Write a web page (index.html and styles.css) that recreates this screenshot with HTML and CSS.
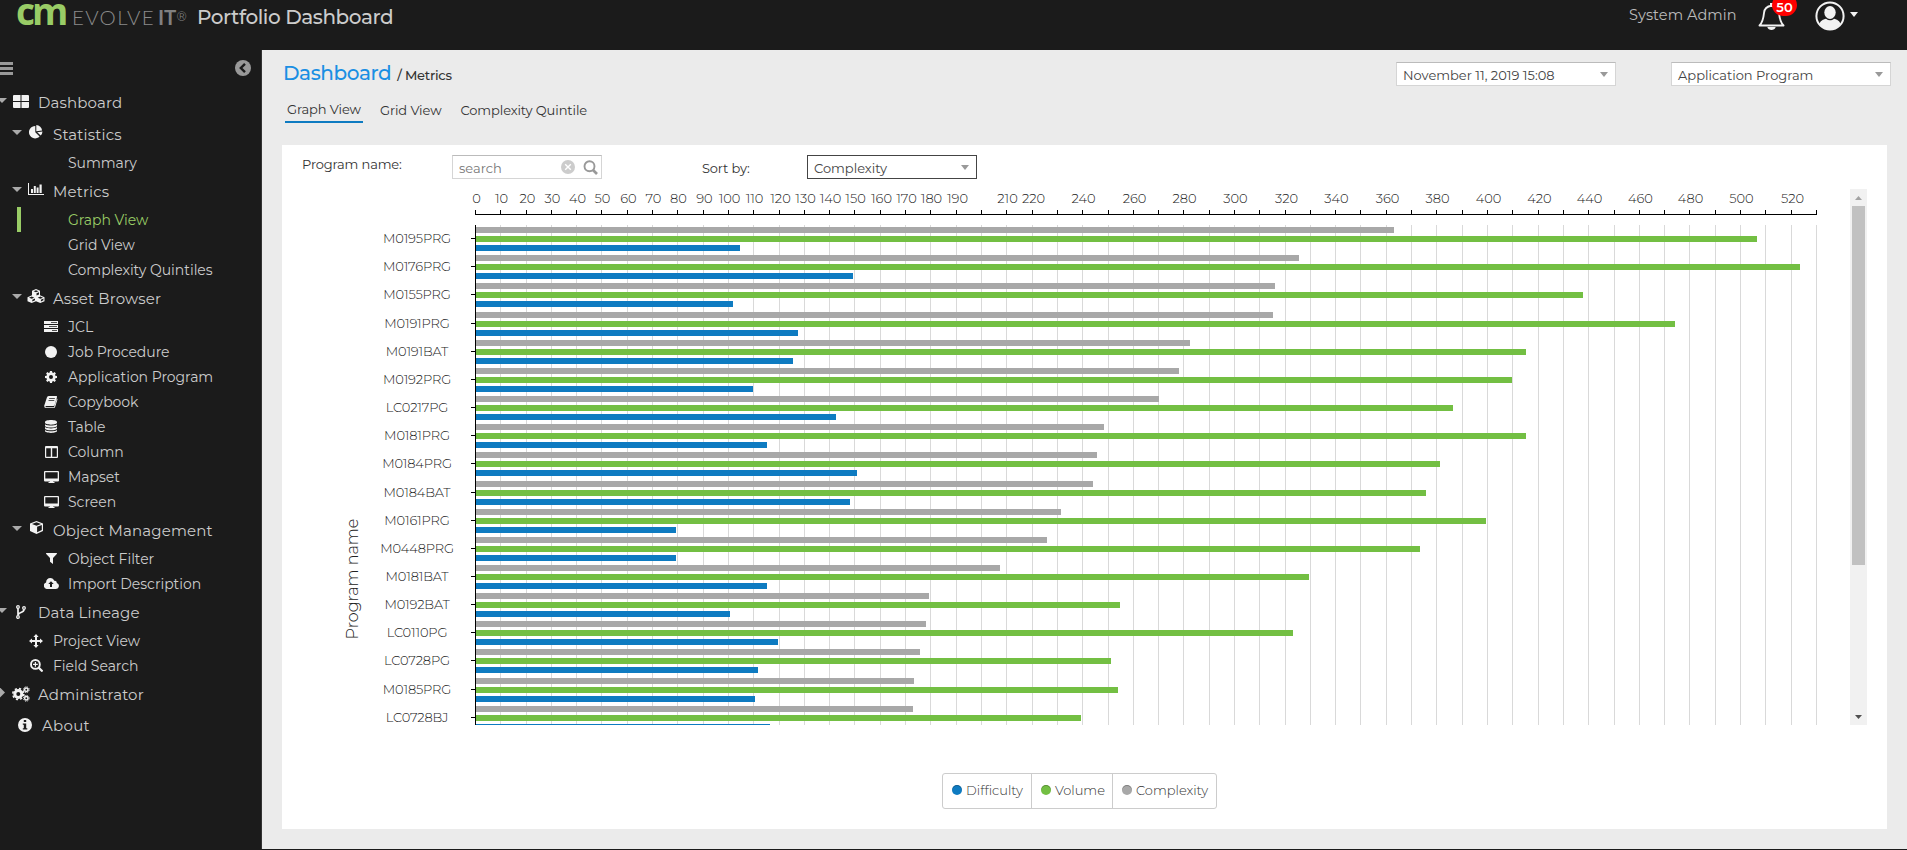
FILE: index.html
```
<!DOCTYPE html>
<html lang="en">
<head>
    <meta charset="UTF-8">
    <meta name="viewport" content="width=device-width, initial-scale=1.0">
    <title>Portfolio Dashboard</title>
    <link rel="stylesheet" href="styles.css">
</head>
<body>
  <svg class="sprite" aria-hidden="true">
    <symbol id="i-grid" viewBox="0 0 16 13"><path d="M1 0h6.5v6H0V1a1 1 0 0 1 1-1zM8.5 0H15a1 1 0 0 1 1 1v5H8.500zM0 7h7.500v6H1a1 1 0 0 1-1-1zM8.500 7H16v5a1 1 0 0 1-1 1H8.500z"/></symbol>
    <symbol id="i-pie" viewBox="0 0 14 14"><path d="M6.300 1v6.200l4.300 4.300A6.200 6.200 0 1 1 6.300 1z"/><path d="M7.300 0a6 6 0 0 1 5.800 5.500L7.300 6.300zM8.200 7.200l5.300-.6a6 6 0 0 1-1.800 4z"/></symbol>
    <symbol id="i-chart" viewBox="0 0 16 12"><path d="M0 0h1v11h15v1H0zM3 6h2v4H3zM5.800 3h2v7h-2zM8.600 4.500h2V10h-2zM11.500 1.500h2.200V10h-2.200z"/></symbol>
    <symbol id="i-cubes" viewBox="0 0 18 14"><path fill-rule="evenodd" d="M9 0l4 1.700v4.500l4.500 2v4L13.300 14 9 12.200 4.700 14 .5 12.200v-4L5 6.200V1.700zM6.500 2.300L9 3.300l2.500-1L9 1.300zM9.500 6.500l2.500-1V3.300l-2.500 1zM2 8.700l2.700 1.100 2.600-1.100-2.600-1.100zM10.700 8.700l2.600 1.100L16 8.700l-2.700-1.100zM5.300 12.500l2.700-1.200V9.500l-2.700 1.200zM13.900 12.500l2.500-1.200V9.500l-2.500 1.200z"/></symbol>
    <symbol id="i-server" viewBox="0 0 14 11"><path fill-rule="evenodd" d="M0 0h14v3H0zM0 4h14v3H0zM0 8h14v3H0zM7 1.200v.7h6v-.7zM5 5.200v.7h8v-.7zM8 9.200v.7h5v-.7z"/></symbol>
    <symbol id="i-circle" viewBox="0 0 12 12"><circle cx="6" cy="6" r="6"/></symbol>
    <symbol id="i-cog" viewBox="0 0 12 12"><path fill-rule="evenodd" d="M5 0h2l.3 1.600 1 .4 1.300-.9 1.300 1.300-.9 1.300.4 1L12 5v2l-1.600.3-.4 1 .9 1.300-1.300 1.300-1.300-.9-1 .4L7 12H5l-.3-1.600-1-.4-1.300.9-1.300-1.300.9-1.300-.4-1L0 7V5l1.600-.3.4-1-.9-1.300 1.300-1.300 1.300.9 1-.4zM6 4a2 2 0 1 0 0 4 2 2 0 0 0 0-4z"/></symbol>
    <symbol id="i-book" viewBox="0 0 14 12"><path fill-rule="evenodd" d="M5 0h7.300q1 0 .7 1l-2.400 8q-.3 1-1.300 1H2.200q-.8 0-.8.6t.8.6H10l2.900-8.700q.8.4.5 1.300l-2.300 7.200q-.3 1-1.300 1H2Q0 12 .2 9.800L2.900 1.400Q3.500 0 5 0zM5.300 2.200l-.3.800h5.700l.3-.8zM4.700 4.200l-.3.8h5.700l.3-.8z"/></symbol>
    <symbol id="i-db" viewBox="0 0 12 13"><path d="M6 0c3.300 0 6 .8 6 1.900v.9c0 1-2.700 1.900-6 1.900S0 3.800 0 2.800v-.9C0 .8 2.700 0 6 0zM0 4.300c1.500 1 4 1.300 6 1.300s4.500-.3 6-1.300v1.400c0 1-2.700 1.800-6 1.800S0 6.700 0 5.700zM0 7.100c1.500 1 4 1.300 6 1.300s4.500-.3 6-1.300v1.400c0 1-2.700 1.800-6 1.800s-6-.8-6-1.800zM0 9.900c1.500 1 4 1.300 6 1.300s4.500-.3 6-1.300v1.200C12 12.200 9.300 13 6 13s-6-.8-6-1.900z"/></symbol>
    <symbol id="i-columns" viewBox="0 0 13 12"><path fill-rule="evenodd" d="M1 0h11q1 0 1 1v10q0 1-1 1H1q-1 0-1-1V1q0-1 1-1zM1.200 2.300v8.500h4.600V2.300zM7.200 2.300v8.500h4.600V2.300z"/></symbol>
    <symbol id="i-desktop" viewBox="0 0 15 12"><path fill-rule="evenodd" d="M1 0h13q1 0 1 1v8.500q0 1-1 1H9.200V11h1.300v1h-6v-1h1.300v-.5H1q-1 0-1-1V1q0-1 1-1zM1.300 1.300v6.300h12.400V1.300z"/></symbol>
    <symbol id="i-cube" viewBox="0 0 13 13"><path fill-rule="evenodd" d="M6.500 0L13 2.400V10l-6.500 3L0 10V2.400zM6.500 1.300L2 3l4.500 1.700L11 3zM7.100 11.300l4.700-2.200V4L7.100 5.800z"/></symbol>
    <symbol id="i-filter" viewBox="0 0 11 11"><path d="M.3 0h10.400q.5.300.1.900L7 5v6L4 8.800V5L.2.900Q-.2.300.3 0z"/></symbol>
    <symbol id="i-cloud" viewBox="0 0 15 11"><path fill-rule="evenodd" d="M6.300 0c2 0 3.400 1.200 3.900 2.800 1.600-.5 2.900.8 2.500 2.300A3 3 0 0 1 12 11H3.500A3.400 3.400 0 0 1 2.100 4.400C2 1.800 3.900 0 6.300 0zM7 3.200L4.300 6H6v3h2V6h1.700z"/></symbol>
    <symbol id="i-branch" viewBox="0 0 10 14"><g fill="none" stroke="currentColor" stroke-width="1.300"><circle cx="2" cy="2" r="1.300"/><circle cx="2" cy="12" r="1.300"/><circle cx="8" cy="3" r="1.300"/><path stroke-width="1.700" d="M2 3.500v7M8 4.500C8 8 2.500 7 2.200 9.800"/></g></symbol>
    <symbol id="i-move" viewBox="0 0 14 14"><path d="M7 0l2.600 3H8v3h3V4.400L14 7l-3 2.600V8H8v3h1.600L7 14l-2.600-3H6V8H3v1.600L0 7l3-2.600V6h3V3H4.400z"/></symbol>
    <symbol id="i-zoomin" viewBox="0 0 13 13"><g fill="none" stroke="currentColor"><circle cx="5.400" cy="5.400" r="4.400" stroke-width="1.900"/><path stroke-width="1.200" d="M3 5.400h4.800M5.400 3v4.800"/><path stroke-width="2.300" stroke-linecap="round" d="M9 9l2.800 2.800"/></g></symbol>
    <symbol id="i-cogs" viewBox="0 0 18 16"><g fill="none" stroke="currentColor"><circle cx="6.300" cy="8" r="3.500" stroke-width="3"/><circle cx="6.300" cy="8" r="5.500" stroke-width="1.600" stroke-dasharray="2.200 2.120"/><circle cx="14.300" cy="3.700" r="1.700" stroke-width="1.500"/><circle cx="14.300" cy="3.700" r="2.900" stroke-width="1" stroke-dasharray="1.200 1.080"/><circle cx="14.300" cy="12.300" r="1.700" stroke-width="1.500"/><circle cx="14.300" cy="12.300" r="2.900" stroke-width="1" stroke-dasharray="1.200 1.080"/></g></symbol>
    <symbol id="i-info" viewBox="0 0 14 14"><path fill-rule="evenodd" d="M7 0a7 7 0 1 1 0 14A7 7 0 0 1 7 0zM5.800 2v2h2.400V2zM4.800 5.500v1.300h1v3.400h-1v1.400h4.500v-1.400H8.200V5.500z"/></symbol>
    <symbol id="i-back" viewBox="0 0 16 16"><circle cx="8" cy="8" r="8"/><path d="M10 3.800L5.800 8l4.200 4.200" fill="none" stroke="#1b1b1b" stroke-width="2.400"/></symbol>
    <symbol id="i-bell" viewBox="0 0 27 29"><path fill="none" stroke="currentColor" stroke-width="1.900" stroke-linejoin="round" d="M1.500 23.500C5 20 5.500 16 6 11c.4-4.200 3-6.700 7.500-7.200 4.500.5 7.100 3 7.500 7.200.5 5 1 9 4.500 12.500z"/><path d="M12 1h3v3h-3zM9.300 25h8.400c-.8 2.300-2.200 3-4.200 3s-3.400-.7-4.200-3z"/></symbol>
    <symbol id="i-user" viewBox="0 0 30 30"><circle cx="15" cy="15" r="13.600" fill="none" stroke="currentColor" stroke-width="2"/><ellipse cx="15" cy="11.500" rx="5.700" ry="6.500"/><path d="M4.500 23c1-3.500 3.500-4.500 6.500-5.300 2.500 2 5.500 2 8 0 3 .8 5.500 1.800 6.500 5.300-5 7.400-16 7.400-21 0z"/></symbol>
    <symbol id="i-clear" viewBox="0 0 14 14"><circle cx="7" cy="7" r="7" fill="#ccc"/><path d="M4.200 4.200l5.600 5.600M9.800 4.200L4.200 9.800" stroke="#fff" stroke-width="1.400"/></symbol>
    <symbol id="i-search" viewBox="0 0 15 15"><g fill="none" stroke="#999"><circle cx="6.500" cy="6.300" r="5" stroke-width="1.900"/><path stroke-width="2.600" d="M10 10l4 4"/></g></symbol>
  </svg>

  <header class="topbar">
    <div class="brand">
      <span class="brand-cm">cm</span>
      <span class="brand-evolve">EVOLVE</span>
      <span class="brand-it">IT</span>
      <span class="brand-reg">®</span>
      <h1 class="brand-title">Portfolio Dashboard</h1>
    </div>
    <div class="user-area">
      <span class="user-name">System Admin</span>
      <div class="bell">
        <svg width="27" height="29"><use href="#i-bell"/></svg>
        <span class="badge">50</span>
      </div>
      <svg class="avatar" width="30" height="30"><use href="#i-user"/></svg>
      <i class="caret"></i>
    </div>
  </header>

  <div class="layout">
    <nav class="sidebar">
      <div class="sidebar-tools">
        <span class="burger"><i></i><i></i><i></i></span>
        <svg class="collapse" width="16" height="16"><use href="#i-back"/></svg>
      </div>
      <div class="group level1"><i class="arrow"></i><span class="icon"><svg width="16" height="13"><use href="#i-grid"/></svg></span><span>Dashboard</span></div>
      <div class="group level2"><i class="arrow"></i><span class="icon"><svg width="14" height="14"><use href="#i-pie"/></svg></span><span>Statistics</span></div>
      <a class="item"><span class="icon"></span>Summary</a>
      <div class="group level2"><i class="arrow"></i><span class="icon"><svg width="16" height="12"><use href="#i-chart"/></svg></span><span>Metrics</span></div>
      <a class="item active"><span class="icon"></span>Graph View</a>
      <a class="item"><span class="icon"></span>Grid View</a>
      <a class="item"><span class="icon"></span>Complexity Quintiles</a>
      <div class="group level2"><i class="arrow"></i><span class="icon"><svg width="18" height="14"><use href="#i-cubes"/></svg></span><span>Asset Browser</span></div>
      <a class="item"><span class="icon"><svg width="14" height="11"><use href="#i-server"/></svg></span>JCL</a>
      <a class="item"><span class="icon"><svg width="12" height="12"><use href="#i-circle"/></svg></span>Job Procedure</a>
      <a class="item"><span class="icon"><svg width="12" height="12"><use href="#i-cog"/></svg></span>Application Program</a>
      <a class="item"><span class="icon"><svg width="14" height="12"><use href="#i-book"/></svg></span>Copybook</a>
      <a class="item"><span class="icon"><svg width="12" height="13"><use href="#i-db"/></svg></span>Table</a>
      <a class="item"><span class="icon"><svg width="13" height="12"><use href="#i-columns"/></svg></span>Column</a>
      <a class="item"><span class="icon"><svg width="15" height="12"><use href="#i-desktop"/></svg></span>Mapset</a>
      <a class="item"><span class="icon"><svg width="15" height="12"><use href="#i-desktop"/></svg></span>Screen</a>
      <div class="group level2"><i class="arrow"></i><span class="icon"><svg width="13" height="13"><use href="#i-cube"/></svg></span><span>Object Management</span></div>
      <a class="item"><span class="icon"><svg width="11" height="11"><use href="#i-filter"/></svg></span>Object Filter</a>
      <a class="item"><span class="icon"><svg width="15" height="11"><use href="#i-cloud"/></svg></span>Import Description</a>
      <div class="group level1"><i class="arrow"></i><span class="icon"><svg width="10" height="14"><use href="#i-branch"/></svg></span><span>Data Lineage</span></div>
      <a class="item shallow"><span class="icon"><svg width="14" height="14"><use href="#i-move"/></svg></span>Project View</a>
      <a class="item shallow"><span class="icon"><svg width="13" height="13"><use href="#i-zoomin"/></svg></span>Field Search</a>
      <div class="group level1"><i class="arrow closed"></i><span class="icon"><svg width="18" height="16"><use href="#i-cogs"/></svg></span><span>Administrator</span></div>
      <div class="group about"><span class="icon"><svg width="14" height="14"><use href="#i-info"/></svg></span><span>About</span></div>
    </nav>

    <main class="content">
      <div class="crumbs">
        <div class="crumb-path"><a class="crumb-root">Dashboard</a><span class="crumb-sub">/ Metrics</span></div>
        <div class="crumb-filters">
          <div class="select">November 11, 2019 15:08<i class="caret grey"></i></div>
          <div class="select">Application Program<i class="caret grey"></i></div>
        </div>
      </div>
      <div class="tabs">
        <a class="tab current">Graph View</a>
        <a class="tab">Grid View</a>
        <a class="tab">Complexity Quintile</a>
      </div>

      <section class="panel">
        <div class="filters">
          <span class="lbl-name">Program name:</span>
          <div class="search"><span>search</span><svg width="14" height="14"><use href="#i-clear"/></svg><svg width="15" height="15"><use href="#i-search"/></svg></div>
          <span class="lbl-sort">Sort by:</span>
          <div class="select dark">Complexity<i class="caret grey"></i></div>
        </div>
        <div class="chart-row">
          <svg id="chart" class="chart" width="1568" height="536"></svg>
          <div class="scrollbar"><i class="up"></i><b class="thumb"></b><i class="down"></i></div>
        </div>
        <div class="legend">
          <span><i class="dot blue"></i>Difficulty</span>
          <span><i class="dot green"></i>Volume</span>
          <span><i class="dot gray"></i>Complexity</span>
        </div>
      </section>
    </main>
  </div>
  <script src="chart.js"></script>
</body>
</html>
```
FILE: styles.css
```
* {
  box-sizing: border-box;
}
body {
  margin: 0;
  height: 850px;
  overflow: hidden;
  background: #1b1b1b;
  font-family: Montserrat, Inter, "Open Sans", sans-serif;
  font-size: 14px;
  color: #333;
}
.sprite {
  position: absolute;
  width: 0;
  height: 0;
}
svg {
  display: block;
  fill: currentColor;
}

/* top bar */
.topbar {
  height: 50px;
  display: flex;
  justify-content: space-between;
  align-items: flex-start;
  color: #ccc;
}
.brand {
  display: flex;
  align-items: baseline;
  height: 50px;
  padding-left: 16px;
}
.brand-cm {
  width: 56px;
  font: 700 37px/22px "Open Sans", sans-serif;
  letter-spacing: -3px;
  color: #9c6;
}
.brand-evolve {
  width: 86px;
  font: 300 20.5px/22px Lato, sans-serif;
  letter-spacing: 1.3px;
  color: #8a8a8a;
}
.brand-it {
  width: 20px;
  font: 700 20.5px/22px Lato, sans-serif;
  color: #808080;
}
.brand-reg {
  width: 19px;
  font-size: 11px;
  line-height: 22px;
  color: #888;
  transform: translateY(-5px) scale(1.15);
}
.brand-title {
  margin: 0;
  font-size: 20px;
  font-weight: 500;
  line-height: 22px;
  letter-spacing: -.43px;
  transform: translateY(-1px);
}
.user-area {
  display: flex;
  padding: 1px 49px 0 0;
}
.user-name {
  width: 129px;
  padding-left: 1px;
  line-height: 29px;
  font-size: 14.5px;
  letter-spacing: .1px;
  color: #bbb;
}
.bell {
  position: relative;
  width: 58px;
  padding: 1px 0 0 1px;
  color: #f2f2f2;
}
.badge {
  position: absolute;
  left: 15px;
  top: -7px;
  width: 25px;
  height: 22px;
  border-radius: 11px;
  background: #f00;
  color: #fff;
  font-size: 13px;
  font-weight: 600;
  line-height: 27px;
  text-align: center;
}
.avatar {
  color: #f2f2f2;
}
.caret {
  width: 0;
  height: 0;
  border: 4px solid transparent;
  border-top: 5px solid #f2f2f2;
  border-bottom: 0;
}
.user-area .caret {
  margin: 11px 0 0 5px;
}
.caret.grey {
  border-top-color: #999;
}

.layout {
  display: flex;
  height: 799px;
}

/* sidebar tree */
.sidebar {
  width: 262px;
  border-right: 1px solid #333;
  color: #ccc;
}
.sidebar-tools {
  display: flex;
  justify-content: space-between;
  height: 36px;
  padding: 10px 10px 0 0;
  color: #999;
}
.burger {
  display: flex;
  flex-direction: column;
  gap: 2px;
  width: 13px;
  padding-top: 2px;
}
.burger i {
  height: 3px;
  background: #999;
}
.group,
.item {
  display: flex;
  align-items: center;
  white-space: nowrap;
}
.group {
  height: 32px;
  font-size: 15px;
  letter-spacing: .15px;
}
.item {
  height: 25px;
  padding-left: 42px;
  font-size: 14px;
  letter-spacing: -.03px;
}
.item.shallow {
  padding-left: 27px;
}
.level1 {
  margin-left: -8px;
}
.level2 {
  padding-left: 7px;
}
.about {
  height: 30px;
  padding-left: 16px;
  letter-spacing: .3px;
}
.icon {
  display: flex;
  justify-content: center;
  width: 18px;
  margin-right: 8px;
  color: #f2f2f2;
}
.level2 .icon {
  margin-bottom: 5px;
}
.level1 .icon {
  margin-bottom: 1px;
}
.arrow {
  width: 10px;
  height: 5px;
  margin: -3px 5px 0;
  background: #aaa;
  clip-path: polygon(0 0, 100% 0, 50% 100%);
}
.arrow.closed {
  width: 5px;
  height: 10px;
  margin: -3px 7px 0 8px;
  clip-path: polygon(0 0, 100% 50%, 0 100%);
}
.item.active {
  margin-left: 17px;
  padding-left: 21px;
  border-left: 4px solid #9c6;
  color: #9c6;
}

/* content */
.content {
  flex: 1;
  background: #ebebeb;
  padding: 12px 16px 0 20px;
}
.crumbs {
  display: flex;
  justify-content: space-between;
  height: 34px;
}
.crumb-path {
  display: flex;
  align-items: baseline;
  gap: 6px;
  padding-left: 1px;
  line-height: 23px;
}
.crumb-root {
  font-size: 20px;
  font-weight: 500;
  letter-spacing: -.4px;
  color: #1a8fe3;
}
.crumb-sub {
  font-size: 13px;
  font-weight: 500;
  letter-spacing: -.25px;
}
.crumb-filters {
  display: flex;
  gap: 55px;
}
.select {
  display: flex;
  justify-content: space-between;
  align-items: center;
  width: 220px;
  height: 24px;
  padding: 2px 7px 0 6px;
  border: 1px solid #d5d5d5;
  border-top-color: #bbb;
  background: #fff;
  font-size: 13px;
  color: #444;
}
.select .caret {
  margin-bottom: 1px;
}
.select.dark {
  width: 170px;
  border-color: #444;
}
.tabs {
  display: flex;
  gap: 15px;
  height: 49px;
  padding-left: 3px;
  font-size: 13px;
  line-height: 27px;
  letter-spacing: -.1px;
}
.tab {
  height: 27px;
  padding: 1px 2px;
  white-space: nowrap;
}
.tab.current {
  width: 78px;
  padding-top: 0;
  border-bottom: 2px solid #0e7bc1;
}

.panel {
  width: 1605px;
  height: 684px;
  background: #fff;
}
.filters {
  display: flex;
  align-items: flex-start;
  height: 44px;
  padding: 10px 0 0 20px;
  font-size: 13px;
  line-height: 19px;
}
.lbl-name {
  width: 150px;
  letter-spacing: -.15px;
}
.lbl-sort {
  width: 105px;
  padding-top: 4px;
  letter-spacing: -.15px;
}
.search {
  display: flex;
  align-items: center;
  gap: 8px;
  width: 150px;
  height: 24px;
  margin-right: 100px;
  padding: 0 3px 0 6px;
  border: 1px solid #d5d5d5;
  border-top-color: #bbb;
  color: #777;
}
.search span {
  flex: 1;
  padding-top: 3px;
}
.chart-row {
  display: flex;
  height: 536px;
}
.chart text {
  fill: #222;
  font-size: 13px;
  font-weight: 300;
  text-anchor: middle;
}
.chart .row-label {
  letter-spacing: -.15px;
}
.chart .axis-title {
  font-size: 16px;
}
.axis {
  stroke: #000;
  fill: none;
}
.grid {
  stroke: #d9d9d9;
}
.green {
  fill: #73bf43;
  background: #73bf43;
}
.blue {
  fill: #0e7bc1;
  background: #0e7bc1;
}
.gray {
  fill: #a8a8a8;
  background: #a8a8a8;
}
.scrollbar {
  display: flex;
  flex-direction: column;
  align-items: center;
  width: 17px;
  background: #f1f1f1;
}
.up,
.down {
  width: 7px;
  height: 4px;
  margin: 7px 0 6px;
  background: #a3a3a3;
  clip-path: polygon(50% 0, 100% 100%, 0 100%);
}
.thumb {
  width: 13px;
  height: 359px;
  margin-bottom: auto;
  background: #c1c1c1;
}
.down {
  background: #505050;
  clip-path: polygon(0 0, 100% 0, 50% 100%);
}
.legend {
  display: flex;
  width: 275px;
  height: 36px;
  margin: 48px 0 0 660px;
  border: 1px solid #ccc;
  border-radius: 3px;
  font-size: 13px;
  font-weight: 300;
  line-height: 32px;
}
.legend span {
  display: flex;
  align-items: center;
  gap: 4px;
  height: 34px;
  padding: 0 0 2px 9px;
}
.legend span:nth-child(1) {
  width: 88px;
}
.legend span:nth-child(2) {
  width: 81px;
}
.legend span + span {
  border-left: 1px solid #ccc;
}
.dot {
  width: 10px;
  height: 10px;
  border-radius: 50%;
  box-shadow: inset 0 1px 0 rgba(0, 0, 0, .25);
}
```
FILE: chart.js
```
// name, complexity, volume, difficulty
const rows = [
  ['M0195PRG', 363.0, 506.5, 104.2],
  ['M0176PRG', 325.1, 523.5, 149.2],
  ['M0155PRG', 316.0, 437.7, 101.4],
  ['M0191PRG', 315.2, 474.1, 127.1],
  ['M0191BAT', 282.4, 415.2, 125.1],
  ['M0192PRG', 277.7, 409.3, 109.3],
  ['LC0217PG', 269.8, 386.0, 142.1],
  ['M0181PRG', 248.4, 415.2, 115.2],
  ['M0184PRG', 245.3, 381.2, 150.4],
  ['M0184BAT', 243.7, 375.3, 148.0],
  ['M0161PRG', 231.4, 399.4, 79.2],
  ['M0448PRG', 225.5, 373.3, 79.2],
  ['M0181BAT', 207.3, 329.1, 115.2],
  ['M0192BAT', 178.9, 254.7, 100.2],
  ['LC0110PG', 177.7, 323.1, 119.2],
  ['LC0728PG', 175.5, 250.8, 111.3],
  ['M0185PRG', 173.3, 253.6, 110.1],
  ['LC0728BJ', 172.9, 239.3, 116.4]
];

const left = 193;
const scale = 2.53;
const axisY = 25;
const plotTop = 36;
const plotBottom = 536;

const svg = document.getElementById('chart');

function add(tag, attrs, text) {
  const el = document.createElementNS('http://www.w3.org/2000/svg', tag);
  for (const key in attrs) el.setAttribute(key, attrs[key]);
  if (text !== undefined) el.textContent = text;
  svg.appendChild(el);
}

const xOf = v => left + Math.round(v * scale);

for (let v = 0; v <= 530; v += 10) {
  const x = xOf(v) + 0.5;
  if (v) add('path', { class: 'grid', d: `M${x} ${plotTop}V${plotBottom}` });
  add('path', { class: 'axis', d: `M${x} ${axisY - 4}V${axisY}` });
  const show = v < 200 || v === 210 || (v > 210 && v < 530 && v % 20 === 0);
  if (show) add('text', { x: x + 1, y: 14 }, v);
}
add('path', { class: 'axis', d: `M${left} ${axisY + 0.5}H${xOf(530) + 1}` });

rows.forEach(([name, complexity, volume, difficulty], i) => {
  const y = 50 + Math.floor(i * 28.15 + 0.67);
  const bar = (value, top, cls) =>
    add('rect', { class: cls, x: left + 1, y: top, width: xOf(value) - left, height: 6 });
  bar(complexity, y - 12, 'gray');
  bar(volume, y - 3, 'green');
  bar(difficulty, y + 6, 'blue');
  add('path', { class: 'axis', d: `M${left - 4} ${y - 0.5}H${left}` });
  add('text', { class: 'row-label', x: 135, y: y + 4 }, name);
});

add('path', { class: 'axis', d: `M${left + 0.5} ${plotTop}V${plotBottom}` });
add('text', { class: 'axis-title', transform: 'translate(76 390) rotate(-90)' }, 'Program name');
```
